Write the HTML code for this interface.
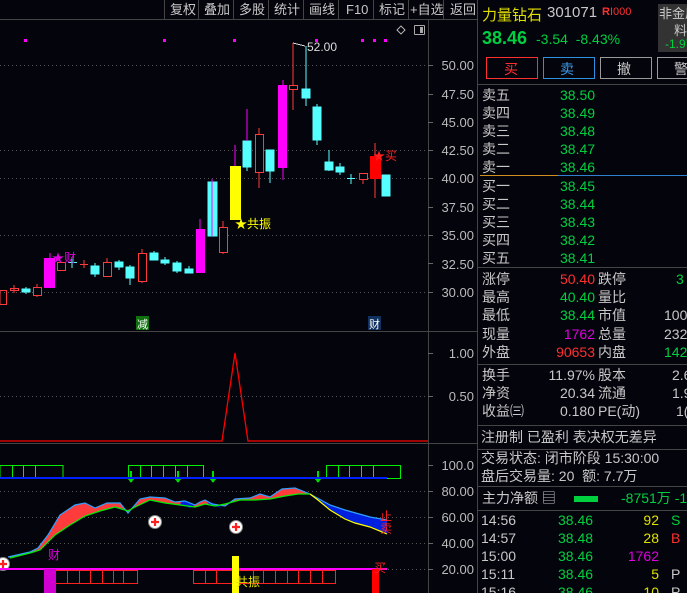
<!DOCTYPE html>
<html><head><meta charset="utf-8"><style>
*{margin:0;padding:0;box-sizing:border-box}
body{width:687px;height:593px;background:#04040c;overflow:hidden;position:relative;font-family:"Liberation Sans","Noto Sans CJK SC",sans-serif;color:#c8c8c8}
.t{position:absolute;white-space:nowrap}
.r{position:absolute;left:477px;width:210px;height:507px;overflow:hidden}
.g{color:#00d040}.rd{color:#ff3030}.y{color:#e0e000}.m{color:#e000e0}.w{color:#c8c8c8}
.row{position:absolute;left:0;width:210px;height:19px;font-size:14px;line-height:19px}
.row span{position:absolute;white-space:nowrap}
</style></head><body>
<svg width="687" height="593" style="position:absolute;left:0;top:0" xmlns="http://www.w3.org/2000/svg" shape-rendering="crispEdges">
<line x1="0" y1="19.5" x2="477" y2="19.5" stroke="#444"/>
<g stroke="#444"><line x1="164.5" y1="0" x2="164.5" y2="19"/><line x1="198.5" y1="0" x2="198.5" y2="19"/><line x1="233.5" y1="0" x2="233.5" y2="19"/><line x1="268.5" y1="0" x2="268.5" y2="19"/><line x1="303.5" y1="0" x2="303.5" y2="19"/><line x1="338.5" y1="0" x2="338.5" y2="19"/><line x1="373.5" y1="0" x2="373.5" y2="19"/><line x1="408.5" y1="0" x2="408.5" y2="19"/><line x1="443.5" y1="0" x2="443.5" y2="19"/></g>
<line x1="428.5" y1="20" x2="428.5" y2="593" stroke="#444"/>
<line x1="477.5" y1="0" x2="477.5" y2="593" stroke="#444"/>
<line x1="0" y1="331.5" x2="477" y2="331.5" stroke="#444"/>
<line x1="0" y1="443.5" x2="477" y2="443.5" stroke="#444"/>
<g stroke="#555" stroke-dasharray="1,3">
<line x1="0" y1="65.5" x2="428" y2="65.5"/><line x1="0" y1="150.5" x2="428" y2="150.5"/><line x1="0" y1="178.5" x2="428" y2="178.5"/><line x1="0" y1="235.5" x2="428" y2="235.5"/><line x1="0" y1="292.5" x2="428" y2="292.5"/>
<line x1="0" y1="396.5" x2="428" y2="396.5"/>
<line x1="0" y1="491.5" x2="428" y2="491.5"/><line x1="0" y1="517.5" x2="428" y2="517.5"/><line x1="0" y1="543.5" x2="428" y2="543.5"/><line x1="0" y1="569.5" x2="428" y2="569.5"/>
</g>
<g stroke="#666"><line x1="428" y1="65.5" x2="433" y2="65.5"/><line x1="428" y1="94.5" x2="433" y2="94.5"/><line x1="428" y1="122.5" x2="433" y2="122.5"/><line x1="428" y1="150.5" x2="433" y2="150.5"/><line x1="428" y1="178.5" x2="433" y2="178.5"/><line x1="428" y1="207.5" x2="433" y2="207.5"/><line x1="428" y1="235.5" x2="433" y2="235.5"/><line x1="428" y1="263.5" x2="433" y2="263.5"/><line x1="428" y1="292.5" x2="433" y2="292.5"/><line x1="428" y1="353.5" x2="433" y2="353.5"/><line x1="428" y1="396.5" x2="433" y2="396.5"/><line x1="428" y1="465.5" x2="433" y2="465.5"/><line x1="428" y1="491.5" x2="433" y2="491.5"/><line x1="428" y1="517.5" x2="433" y2="517.5"/><line x1="428" y1="543.5" x2="433" y2="543.5"/><line x1="428" y1="569.5" x2="433" y2="569.5"/></g>
<g fill="#ff00ff"><rect x="24" y="39" width="3" height="3"/><rect x="163" y="39" width="3" height="3"/><rect x="233" y="39" width="3" height="3"/><rect x="315" y="39" width="3" height="3"/><rect x="361" y="39" width="3" height="3"/><rect x="373" y="39" width="3" height="3"/><rect x="384" y="39" width="3" height="3"/></g>
<rect x="414.5" y="25.5" width="10" height="9" fill="none" stroke="#aaa" rx="1"/><rect x="420" y="27" width="3" height="6" fill="#aaa"/>
<path d="M401 26 L405 30 L401 34 L397 30Z" fill="none" stroke="#aaa"/>
<g stroke="#ff3b3b" fill="none">
<line x1="293" y1="43" x2="293" y2="110"/><rect x="289.5" y="85.5" width="8" height="4" fill="#04040c"/>
<rect x="0" y="290.5" width="6.5" height="14"/>
<line x1="14" y1="285" x2="14" y2="293"/><rect x="10.5" y="288.5" width="8" height="2"/>
<line x1="37" y1="284" x2="37" y2="297"/><rect x="33.5" y="287.5" width="8" height="8" fill="#04040c"/>
<rect x="57.5" y="262.5" width="8" height="8"/>
<line x1="84" y1="260" x2="84" y2="268"/><line x1="80" y1="264.5" x2="88" y2="264.5"/>
<line x1="107" y1="258" x2="107" y2="276"/><rect x="103.5" y="262.5" width="8" height="14" fill="#04040c"/>
<line x1="142" y1="249" x2="142" y2="283"/><rect x="138.5" y="253.5" width="8" height="28" fill="#04040c"/>
<line x1="223" y1="221" x2="223" y2="254"/><rect x="219.5" y="227.5" width="8" height="25" fill="#04040c"/>
<line x1="259" y1="128" x2="259" y2="188"/><rect x="255.5" y="134.5" width="8" height="38" fill="#04040c"/>
<line x1="363" y1="173" x2="363" y2="184"/><rect x="359.5" y="173.5" width="8" height="6" fill="#04040c"/>
<line x1="375" y1="143" x2="375" y2="198"/><rect x="370" y="156" width="11" height="23" fill="#ff0000" stroke="none"/>
</g>
<g stroke="#5ff" fill="#5ff">
<line x1="26" y1="287" x2="26" y2="294"/><rect x="22" y="289" width="8" height="3"/>
<line x1="72" y1="257" x2="72" y2="268"/><line x1="68" y1="262.5" x2="77" y2="262.5"/>
<line x1="95" y1="263" x2="95" y2="277"/><rect x="91" y="266" width="8" height="8"/>
<line x1="119" y1="260" x2="119" y2="270"/><rect x="115" y="262" width="8" height="5"/>
<line x1="130" y1="265" x2="130" y2="285"/><rect x="126" y="267" width="8" height="11"/>
<line x1="154" y1="251" x2="154" y2="260"/><rect x="150" y="253" width="8" height="7"/>
<line x1="165" y1="257" x2="165" y2="265"/><rect x="161" y="260" width="8" height="3"/>
<line x1="177" y1="261" x2="177" y2="273"/><rect x="173" y="263" width="8" height="8"/>
<line x1="189" y1="266" x2="189" y2="273"/><rect x="185" y="269" width="8" height="4"/>
<rect x="208" y="182" width="9" height="54"/>
<rect x="243" y="141" width="8" height="26"/><line x1="247" y1="135" x2="247" y2="171"/>
<rect x="266" y="150" width="8" height="21"/><line x1="270" y1="150" x2="270" y2="183"/>
<line x1="306" y1="46" x2="306" y2="106"/><rect x="302" y="89" width="8" height="9"/>
<line x1="317" y1="104" x2="317" y2="145"/><rect x="313" y="107" width="8" height="33"/>
<line x1="329" y1="150" x2="329" y2="171"/><rect x="325" y="162" width="8" height="8"/>
<line x1="340" y1="163" x2="340" y2="175"/><rect x="336" y="167" width="8" height="5"/>
<line x1="351" y1="174" x2="351" y2="184"/><line x1="347" y1="178.5" x2="355" y2="178.5"/>
<rect x="382" y="175" width="8" height="21"/>
</g>
<g fill="#ff00ff" stroke="#ff00ff">
<rect x="44" y="258" width="11" height="30" stroke="none"/><line x1="50" y1="253" x2="50" y2="258"/>
<rect x="196" y="229" width="9" height="44" stroke="none"/><line x1="200" y1="219" x2="200" y2="229"/>
<line x1="212" y1="179" x2="212" y2="236"/>
<line x1="235" y1="145" x2="235" y2="166"/>
<line x1="247" y1="109" x2="247" y2="141"/>
<rect x="278" y="85" width="9" height="83" stroke="none"/><line x1="283" y1="80" x2="283" y2="85"/><line x1="283" y1="168" x2="283" y2="180"/>
</g>
<rect x="230" y="166" width="11" height="54" fill="#ffff00"/>
<path d="M293 43 L305 46" stroke="#ddd" fill="none"/>
<text x="307" y="51" fill="#ddd" font-size="12" font-family="Liberation Sans">52.00</text>
<text x="235" y="228" fill="#ffff00" font-size="12" font-family="Liberation Sans,Noto Sans CJK SC">★共振</text>
<text x="52" y="262" fill="#e000e0" font-size="12" font-family="Liberation Sans,Noto Sans CJK SC">★财</text>
<text x="373" y="160" fill="#ff2020" font-size="12" font-family="Liberation Sans,Noto Sans CJK SC">★买</text>
<rect x="136" y="316" width="13" height="14" fill="#107010"/><text x="137" y="328" fill="#fff" font-size="11" font-family="Noto Sans CJK SC">减</text>
<rect x="368" y="316" width="13" height="14" fill="#103060"/><text x="369" y="328" fill="#fff" font-size="11" font-family="Noto Sans CJK SC">财</text>
<path d="M0 441 L222 441 L235 353 L248 441 L428 441" stroke="#ff0000" fill="none" stroke-width="1.3" shape-rendering="auto"/>
<g stroke="#00ee00" fill="none">
<rect x="0" y="465.5" width="63" height="13"/><line x1="12.5" y1="465" x2="12.5" y2="478"/><line x1="23.5" y1="465" x2="23.5" y2="478"/><line x1="35.5" y1="465" x2="35.5" y2="478"/>
<rect x="128.5" y="465.5" width="75" height="13"/><line x1="140.5" y1="465" x2="140.5" y2="478"/><line x1="151.5" y1="465" x2="151.5" y2="478"/><line x1="163.5" y1="465" x2="163.5" y2="478"/><line x1="175.5" y1="465" x2="175.5" y2="478"/><line x1="187.5" y1="465" x2="187.5" y2="478"/>
<rect x="326.5" y="465.5" width="74" height="13"/><line x1="338.5" y1="465" x2="338.5" y2="478"/><line x1="349.5" y1="465" x2="349.5" y2="478"/><line x1="361.5" y1="465" x2="361.5" y2="478"/><line x1="373.5" y1="465" x2="373.5" y2="478"/>
</g>
<line x1="0" y1="478" x2="387" y2="478" stroke="#0020ff" stroke-width="2"/>
<g fill="#00dd00"><rect x="130" y="471" width="2" height="6"/><rect x="177" y="471" width="2" height="6"/><rect x="212" y="471" width="2" height="6"/><rect x="317" y="471" width="2" height="6"/>
<path d="M128 479h6l-3 4z"/><path d="M175 479h6l-3 4z"/><path d="M210 479h6l-3 4z"/><path d="M315 479h6l-3 4z"/></g>
<g shape-rendering="auto">
<path d="M8 557 L30 552 L38 548 L48 535 L60 515 L75 505 L85 503 L95 508 L107 503 L120 503 L128 513 L140 499 L150 497 L165 498 L175 502 L185 501 L195 505 L200 502 L205 500 L212 504 L225 506 L235 499 L250 498 L260 494 L270 497 L282 489 L295 488 L310 494 L298 494 L285 496 L270 499 L255 500 L240 500 L225 504 L215 506 L205 504 L195 507 L180 505 L165 503 L150 500 L135 507 L128 510 L115 507 L100 511 L85 516 L70 525 L55 535 L40 550 L30 553 L10 558Z" fill="#ff3b3b"/>
<path d="M183 500 L195 505 L190 508 L180 504Z M205 500 L215 504 L222 508 L210 505Z M310 494 L330 505 L345 510 L370 517 L387 520 L387 534 L370 527 L355 523 L345 519 L330 510 L318 500Z" fill="#0020e0"/>
<path d="M8 557 L30 552 L38 548 L48 535 L60 515 L75 505 L85 503 L95 508 L107 503 L120 503 L128 513 L140 499 L150 497 L165 498 L175 502 L185 501 L195 505 L200 502 L205 500 L212 504 L225 506 L235 499 L250 498 L260 494 L270 497 L282 489 L295 488 L310 494 L330 505 L345 510 L370 517 L387 520" fill="none" stroke="#30a0ff" stroke-width="1.2"/>
<path d="M10 558 L30 553 L40 550 L55 535 L70 525 L85 516 L100 511 L115 507 L128 511 L135 507 L150 500 L165 503 L180 505 L195 507 L205 504 L215 506 L225 504 L240 500 L255 500 L270 499 L285 496 L298 494 L310 494" fill="none" stroke="#00ee00" stroke-width="1.2"/>
<path d="M310 494 L318 500 L330 510 L345 519 L355 523 L370 527 L387 534" fill="none" stroke="#ffff00" stroke-width="1.2"/>
<g fill="#fff" stroke="#888"><circle cx="155" cy="522" r="6.5"/><circle cx="236" cy="527" r="6.5"/><circle cx="3" cy="564" r="6.5"/></g>
<g stroke="#ff2020" stroke-width="2.2"><path d="M151 522h8M155 518v8M232 527h8M236 523v8M-1 564h8M3 560v8"/></g>
</g>
<line x1="0" y1="569" x2="387" y2="569" stroke="#ff00ff" stroke-width="2"/>
<g stroke="#ff2020" fill="none">
<rect x="55.5" y="570.5" width="82" height="13"/><line x1="67.5" y1="570" x2="67.5" y2="583"/><line x1="79.5" y1="570" x2="79.5" y2="583"/><line x1="90.5" y1="570" x2="90.5" y2="583"/><line x1="102.5" y1="570" x2="102.5" y2="583"/><line x1="113.5" y1="570" x2="113.5" y2="583"/><line x1="123.5" y1="570" x2="123.5" y2="583"/>
<rect x="193.5" y="570.5" width="142" height="13"/><line x1="205.5" y1="570" x2="205.5" y2="583"/><line x1="216.5" y1="570" x2="216.5" y2="583"/><line x1="253.5" y1="570" x2="253.5" y2="583"/><line x1="263.5" y1="570" x2="263.5" y2="583"/><line x1="275.5" y1="570" x2="275.5" y2="583"/><line x1="287.5" y1="570" x2="287.5" y2="583"/><line x1="298.5" y1="570" x2="298.5" y2="583"/><line x1="310.5" y1="570" x2="310.5" y2="583"/><line x1="322.5" y1="570" x2="322.5" y2="583"/>
</g>
<rect x="44" y="569" width="12" height="24" fill="#d000d0"/>
<rect x="232" y="556" width="7" height="37" fill="#ffff00"/>
<rect x="372" y="569" width="7" height="24" fill="#ff0000"/>
<text x="48" y="559" fill="#e000e0" font-size="12" font-family="Noto Sans CJK SC">财</text>
<text x="236" y="586" fill="#e0e000" font-size="12" font-family="Noto Sans CJK SC">共振</text>
<text x="386" y="510" fill="#ff2020" font-size="12" font-family="Noto Sans CJK SC" writing-mode="tb">止卖</text>
<text x="374" y="572" fill="#ff2020" font-size="12" font-family="Noto Sans CJK SC">买</text>
<g fill="#bbb" font-size="13" font-family="Liberation Sans" text-anchor="end">
<text x="474" y="70">50.00</text><text x="474" y="99">47.50</text><text x="474" y="127">45.00</text><text x="474" y="155">42.50</text><text x="474" y="183">40.00</text><text x="474" y="212">37.50</text><text x="474" y="240">35.00</text><text x="474" y="269">32.50</text><text x="474" y="297">30.00</text>
<text x="474" y="358">1.00</text><text x="474" y="401">0.50</text>
<text x="474" y="470">100.0</text><text x="474" y="496">80.00</text><text x="474" y="522">60.00</text><text x="474" y="548">40.00</text><text x="474" y="574">20.00</text>
</g>
<g stroke="#444"><line x1="478" y1="84.5" x2="687" y2="84.5"/><line x1="478" y1="267.5" x2="687" y2="267.5"/><line x1="478" y1="364.5" x2="687" y2="364.5"/><line x1="478" y1="425.5" x2="687" y2="425.5"/><line x1="478" y1="449.5" x2="687" y2="449.5"/><line x1="478" y1="486.5" x2="687" y2="486.5"/><line x1="478" y1="510.5" x2="687" y2="510.5"/></g>
<line x1="480" y1="175.5" x2="558" y2="175.5" stroke="#d09020"/><line x1="558" y1="175.5" x2="687" y2="175.5" stroke="#3080d0"/>
<rect x="658" y="4" width="29" height="48" fill="#333"/>
<g fill="none" stroke-width="1.3"><rect x="486.5" y="57.5" width="51" height="21" stroke="#ff3030"/><rect x="543.5" y="57.5" width="51" height="21" stroke="#3090e0"/><rect x="600.5" y="57.5" width="51" height="21" stroke="#999"/><rect x="657.5" y="57.5" width="40" height="21" stroke="#999"/></g>
<rect x="574" y="496" width="24" height="6" fill="#00d040"/>
</svg>
<div class="t" style="left:0;top:0;width:477px;height:19px;font-size:13px;line-height:19px;color:#c8c8c8">
<span class="t" style="left:170px">复权</span><span class="t" style="left:204px">叠加</span><span class="t" style="left:239px">多股</span><span class="t" style="left:274px">统计</span><span class="t" style="left:309px">画线</span><span class="t" style="left:346px">F10</span><span class="t" style="left:379px">标记</span><span class="t" style="left:410px">+自选</span><span class="t" style="left:450px">返回</span></div>
<div class="t y" style="left:482px;top:4px;font-size:15px">力量钻石</div>
<div class="t w" style="left:547px;top:4px;font-size:15px">301071</div>
<div class="t rd" style="left:602px;top:6px;font-size:11px;font-weight:bold">R<span style="font-weight:normal">I000</span></div>
<div class="t w" style="left:659px;top:3px;font-size:13px">非金属</div>
<div class="t w" style="left:674px;top:20px;font-size:13px">料</div>
<div class="t g" style="left:665px;top:37px;font-size:12px">-1.97</div>
<div class="t g" style="left:482px;top:28px;font-size:18px;font-weight:bold">38.46</div>
<div class="t g" style="left:536px;top:31px;font-size:14px">-3.54 &nbsp;-8.43%</div>
<div class="t rd" style="left:504px;top:59px;font-size:14px">买</div>
<div class="t" style="left:560px;top:59px;font-size:14px;color:#3a9ae8">卖</div>
<div class="t w" style="left:617px;top:59px;font-size:14px">撤</div>
<div class="t w" style="left:674px;top:59px;font-size:14px">警</div>
<div class="r" style="top:86px">
<div class="row" style="top:0"><span style="left:5px">卖五</span><span class="g" style="left:83px">38.50</span></div>
<div class="row" style="top:18px"><span style="left:5px">卖四</span><span class="g" style="left:83px">38.49</span></div>
<div class="row" style="top:36px"><span style="left:5px">卖三</span><span class="g" style="left:83px">38.48</span></div>
<div class="row" style="top:54px"><span style="left:5px">卖二</span><span class="g" style="left:83px">38.47</span></div>
<div class="row" style="top:72px"><span style="left:5px">卖一</span><span class="g" style="left:83px">38.46</span></div>
<div class="row" style="top:91px"><span style="left:5px">买一</span><span class="g" style="left:83px">38.45</span></div>
<div class="row" style="top:109px"><span style="left:5px">买二</span><span class="g" style="left:83px">38.44</span></div>
<div class="row" style="top:127px"><span style="left:5px">买三</span><span class="g" style="left:83px">38.43</span></div>
<div class="row" style="top:145px"><span style="left:5px">买四</span><span class="g" style="left:83px">38.42</span></div>
<div class="row" style="top:163px"><span style="left:5px">买五</span><span class="g" style="left:83px">38.41</span></div>
<div class="row" style="top:184px"><span style="left:5px">涨停</span><span class="rd" style="right:92px">50.40</span><span style="left:121px">跌停</span><span class="g" style="left:199px">3</span></div>
<div class="row" style="top:202px"><span style="left:5px">最高</span><span class="g" style="right:92px">40.40</span><span style="left:121px">量比</span></div>
<div class="row" style="top:220px"><span style="left:5px">最低</span><span class="g" style="right:92px">38.44</span><span style="left:121px">市值</span><span style="left:187px">100</span></div>
<div class="row" style="top:239px"><span style="left:5px">现量</span><span class="m" style="right:92px">1762</span><span style="left:121px">总量</span><span style="left:187px">232</span></div>
<div class="row" style="top:257px"><span style="left:5px">外盘</span><span class="rd" style="right:92px">90653</span><span style="left:121px">内盘</span><span class="g" style="left:187px">142</span></div>
<div class="row" style="top:280px"><span style="left:5px">换手</span><span style="right:92px">11.97%</span><span style="left:121px">股本</span><span style="left:195px">2.6</span></div>
<div class="row" style="top:298px"><span style="left:5px">净资</span><span style="right:92px">20.34</span><span style="left:121px">流通</span><span style="left:195px">1.9</span></div>
<div class="row" style="top:316px"><span style="left:5px">收益㈢</span><span style="right:92px">0.180</span><span style="left:121px">PE(动)</span><span style="left:199px">1(</span></div>
<div class="row" style="top:342px"><span style="left:4px">注册制 已盈利 表决权无差异</span></div>
<div class="row" style="top:363px"><span style="left:4px">交易状态: 闭市阶段 15:30:00</span></div>
<div class="row" style="top:381px"><span style="left:4px">盘后交易量: 20 &nbsp;额: 7.7万</span></div>
<div class="row" style="top:403px"><span style="left:5px">主力净额 ▤</span><span class="g" style="left:144px">-8751万 -1</span></div>
<div class="row" style="top:425px"><span style="left:4px">14:56</span><span class="g" style="left:81px">38.46</span><span class="y" style="right:28px">92</span><span class="g" style="left:194px">S</span></div>
<div class="row" style="top:443px"><span style="left:4px">14:57</span><span class="g" style="left:81px">38.48</span><span class="y" style="right:28px">28</span><span class="rd" style="left:194px">B</span></div>
<div class="row" style="top:461px"><span style="left:4px">15:00</span><span class="g" style="left:81px">38.46</span><span class="m" style="right:28px">1762</span></div>
<div class="row" style="top:479px"><span style="left:4px">15:11</span><span class="g" style="left:81px">38.46</span><span class="y" style="right:28px">5</span><span style="left:194px">P</span></div>
<div class="row" style="top:497px"><span style="left:4px">15:16</span><span class="g" style="left:81px">38.46</span><span class="y" style="right:28px">10</span><span style="left:194px">P</span></div>
</div>
</body></html>
